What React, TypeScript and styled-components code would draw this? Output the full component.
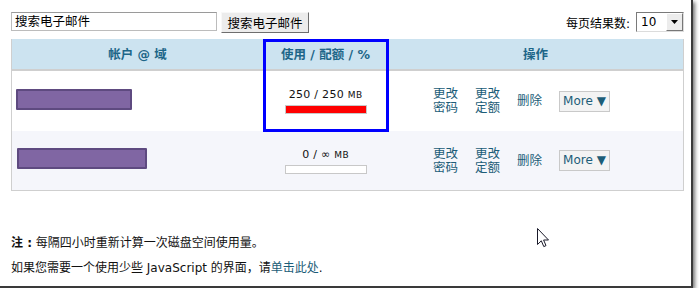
import React from "react";
import styled, { createGlobalStyle } from "styled-components";

const Global = createGlobalStyle`
  html, body { margin: 0; padding: 0; background: #fff; }
  body { font-family: "DejaVu Sans", "Noto Sans CJK SC", sans-serif; font-size: 12px; color: #000; }
`;

const CJK = `"DejaVu Sans", "Noto Sans CJK SC", sans-serif`;

const Frame = styled.div`
  position: relative;
  width: 693px;
  height: 288px;
  background: #fff;
  border-right: 2px solid #3a3a3a;
  border-bottom: 2px solid #3a3a3a;
  box-shadow: 2px 2px 4px rgba(0, 0, 0, 0.55);
  padding: 12px 0 0 11px;
  box-sizing: border-box;
`;

const TopBar = styled.div`
  display: flex;
  align-items: flex-start;
  justify-content: space-between;
  width: 673px;
  height: 21px;
`;

const SearchGroup = styled.div`
  display: flex;
  gap: 4px;
`;

const SearchInput = styled.div`
  width: 206px;
  height: 19px;
  box-sizing: border-box;
  border: 1px solid #bcbcbc;
  border-top-color: #9a9a9a;
  padding: 0 3px;
  font: 12.5px/17px ${CJK};
  color: #000;
`;

const SearchButton = styled.div`
  width: 88px;
  height: 21px;
  box-sizing: border-box;
  background: #ececec;
  border: 1px solid #f8f8f8;
  border-right-color: #6e6e6e;
  border-bottom-color: #6e6e6e;
  font: 12.5px/21px ${CJK};
  text-align: center;
  color: #000;
`;

const PerPage = styled.div`
  display: flex;
  align-items: center;
  gap: 6px;
  font: 12px ${CJK};
`;

const Select = styled.div`
  display: flex;
  width: 48px;
  height: 20px;
  box-sizing: border-box;
  border: 1px solid #7a7a7a;
  border-right-color: #dcdcdc;
  border-bottom-color: #dcdcdc;
  background: #fff;
`;

const SelectValue = styled.div`
  flex: 1;
  padding-left: 4px;
  font: 12px/18px "DejaVu Sans", sans-serif;
`;

const SelectArrow = styled.div`
  width: 17px;
  height: 18px;
  box-sizing: border-box;
  background: #ececec;
  border: 1px solid #fff;
  border-right-color: #777;
  border-bottom-color: #777;
  display: flex;
  align-items: center;
  justify-content: center;
`;

const Table = styled.div`
  position: relative;
  margin-top: 6px;
  width: 673px;
  box-sizing: border-box;
  border: 1px solid #cfcfcf;
  border-top: none;
  display: grid;
  grid-template-columns: 251px 125px 1fr;
`;

const HeadCell = styled.div`
  height: 30px;
  background: #cce3f0;
  border-bottom: 2px solid #cfcfcf;
  display: flex;
  align-items: center;
  justify-content: center;
  font: bold 12.5px ${CJK};
  color: #1d6688;
  padding-bottom: 2px;
  box-sizing: border-box;
  height: 32px;
`;

const Cell = styled.div<{ $alt?: boolean; $h: number }>`
  height: ${(p) => p.$h}px;
  background: ${(p) => (p.$alt ? "#f5f6fb" : "#fff")};
  display: flex;
  align-items: center;
`;

const Redacted = styled.div<{ $w: number }>`
  width: ${(p) => p.$w}px;
  height: 21px;
  box-sizing: border-box;
  background: #8066a3;
  border: 2px solid #5e4a80;
  border-radius: 1px;
  margin-bottom: 4px;
`;

const UsageCell = styled(Cell)`
  flex-direction: column;
  justify-content: center;
  gap: 4px;
`;

const UsageText = styled.div`
  font: 11px "DejaVu Sans", sans-serif;
  color: #111;
  letter-spacing: 0.3px;
`;

const Unit = styled.span`
  font-size: 9px;
`;

const Bar = styled.div`
  width: 82px;
  height: 9px;
  box-sizing: border-box;
  border: 1px solid #c8c8c8;
  background: #fff;
`;

const BarFill = styled.div`
  height: 100%;
  background: #ff0000;
`;

const Actions = styled(Cell)`
  padding-left: 45px;
  gap: 18px;
`;

const ActionLink = styled.div`
  font: 12.5px/14px ${CJK};
  color: #1c5d78;
  width: 24px;
  white-space: nowrap;
`;

const MoreButton = styled.div`
  width: 51px;
  height: 21px;
  box-sizing: border-box;
  border: 1px solid #c9c9c9;
  background: #f3f3f3;
  color: #1c5d78;
  font: 12px/19px "DejaVu Sans", sans-serif;
  text-align: center;
`;

const Highlight = styled.div`
  position: absolute;
  left: 251px;
  top: 0;
  width: 126px;
  height: 93px;
  box-sizing: border-box;
  border: 3px solid #0000ff;
  pointer-events: none;
`;

const Notes = styled.div`
  margin-top: 44px;
  display: flex;
  flex-direction: column;
  gap: 9px;
  font: 12px/16px ${CJK};
  color: #111;
`;

const Link = styled.span`
  color: #1c5d78;
`;

const Cursor = styled.svg`
  position: absolute;
  left: 537px;
  top: 228px;
`;

function Row({ alt, h, w, used }: { alt?: boolean; h: number; w: number; used: boolean }) {
  return (
    <>
      <Cell $alt={alt} $h={h} style={{ paddingLeft: used ? 4 : 5 }}>
        <Redacted $w={w} />
      </Cell>
      <UsageCell $alt={alt} $h={h}>
        <UsageText>
          {used ? "250 / 250 " : "0 / ∞ "}
          <Unit>MB</Unit>
        </UsageText>
        <Bar>{used && <BarFill />}</Bar>
      </UsageCell>
      <Actions $alt={alt} $h={h}>
        <ActionLink>更改<br />密码</ActionLink>
        <ActionLink>更改<br />定额</ActionLink>
        <ActionLink>删除</ActionLink>
        <MoreButton>More ▼</MoreButton>
      </Actions>
    </>
  );
}

export default function App() {
  return (
    <>
      <Global />
      <Frame>
        <TopBar>
          <SearchGroup>
            <SearchInput>搜索电子邮件</SearchInput>
            <SearchButton>搜索电子邮件</SearchButton>
          </SearchGroup>
          <PerPage>
            <span>每页结果数:</span>
            <Select>
              <SelectValue>10</SelectValue>
              <SelectArrow>
                <svg width="7" height="4" viewBox="0 0 7 4">
                  <path d="M0 0h7L3.5 4z" fill="#000" />
                </svg>
              </SelectArrow>
            </Select>
          </PerPage>
        </TopBar>
        <Table>
          <HeadCell>帐户 @ 域</HeadCell>
          <HeadCell>使用 / 配额 / %</HeadCell>
          <HeadCell>操作</HeadCell>
          <Row h={60} w={116} used />
          <Row alt h={59} w={130} used={false} />
          <Highlight />
        </Table>
        <Notes>
          <div><b>注 :</b> 每隔四小时重新计算一次磁盘空间使用量。</div>
          <div>如果您需要一个使用少些 JavaScript 的界面，请<Link>单击此处</Link>.</div>
        </Notes>
        <Cursor width="12" height="20" viewBox="0 0 12 20">
          <path d="M0.5 0.5V16.5L4.3 12.8L6.8 18.6L9 17.6L6.6 12H11.5Z" fill="#fff" stroke="#1a1a2a" strokeWidth="1" strokeLinejoin="round" />
        </Cursor>
      </Frame>
    </>
  );
}
